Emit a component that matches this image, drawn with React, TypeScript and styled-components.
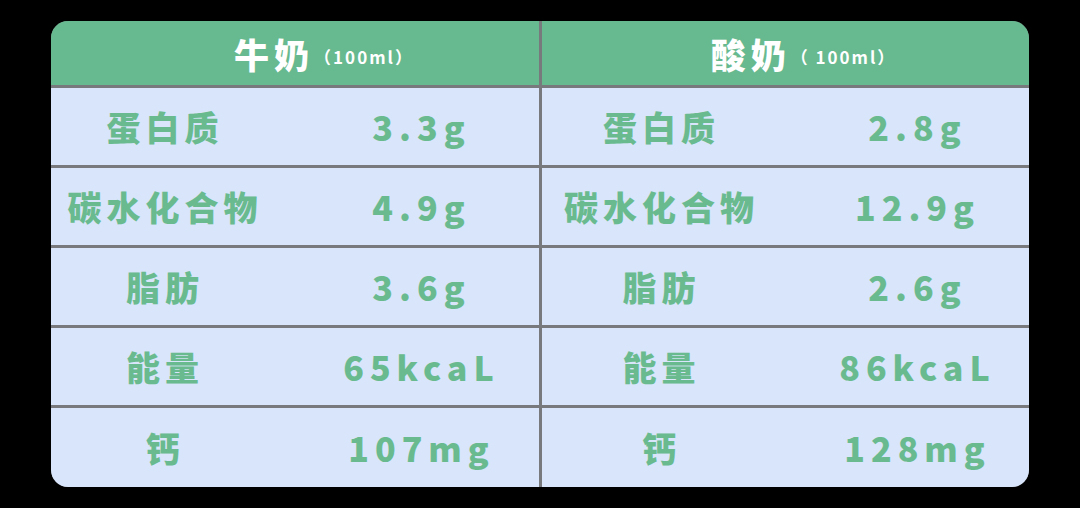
import styled, { createGlobalStyle } from "styled-components";

const GlobalStyle = createGlobalStyle`
  html, body {
    margin: 0;
    padding: 0;
    background: #000;
  }
  body {
    width: 1080px;
    height: 508px;
    overflow: hidden;
    font-family: "Noto Sans CJK SC", "Noto Sans", sans-serif;
  }
`;

const Page = styled.div`
  width: 1080px;
  height: 508px;
  padding: 21px 51px 0 51px;
  box-sizing: border-box;
  background: #000;
`;

const Table = styled.div`
  width: 978px;
  height: 466px;
  border-radius: 17px;
  overflow: hidden;
  display: grid;
  grid-template-columns: 488px 487px;
  column-gap: 3px;
  background: #77797d;
`;

const Panel = styled.div`
  display: grid;
  grid-template-rows: 64px repeat(4, 77px) 79px;
  row-gap: 3px;
`;

const Head = styled.div<{ $shift: number }>`
  background: #67b98f;
  color: #fff;
  display: flex;
  align-items: center;
  justify-content: center;
  padding-left: ${(p) => p.$shift}px;
  font-weight: 900;
`;

const HeadTitle = styled.span`
  font-size: 35px;
  letter-spacing: 5px;
  line-height: 1;
`;

const HeadUnit = styled.span`
  font-size: 17px;
  font-weight: 700;
  letter-spacing: 2px;
  margin-top: 6px;
  white-space: pre;
`;

const Row = styled.div<{ $label: number }>`
  background: #d9e5fa;
  display: grid;
  grid-template-columns: ${(p) => p.$label}px 1fr;
  align-items: center;
  color: #69bb8f;
  font-weight: 900;
  font-size: 34px;
  line-height: 1;
`;

const Label = styled.div`
  text-align: center;
  letter-spacing: 5px;
`;

const Value = styled.div`
  text-align: center;
  padding-left: 25px;
  letter-spacing: 6px;
`;

type Item = [string, string];

const milk: Item[] = [
  ["蛋白质", "3.3g"],
  ["碳水化合物", "4.9g"],
  ["脂肪", "3.6g"],
  ["能量", "65kcaL"],
  ["钙", "107mg"],
];

const yogurt: Item[] = [
  ["蛋白质", "2.8g"],
  ["碳水化合物", "12.9g"],
  ["脂肪", "2.6g"],
  ["能量", "86kcaL"],
  ["钙", "128mg"],
];

function Column({
  title,
  unit,
  shift,
  label,
  items,
}: {
  title: string;
  unit: string;
  shift: number;
  label: number;
  items: Item[];
}) {
  return (
    <Panel>
      <Head $shift={shift}>
        <HeadTitle>{title}</HeadTitle>
        <HeadUnit>{unit}</HeadUnit>
      </Head>
      {items.map(([k, v]) => (
        <Row key={k} $label={label}>
          <Label>{k}</Label>
          <Value>{v}</Value>
        </Row>
      ))}
    </Panel>
  );
}

export default function App() {
  return (
    <Page>
      <GlobalStyle />
      <Table>
        <Column title="牛奶" unit="（100ml）" shift={58} label={228} items={milk} />
        <Column title="酸奶" unit="（ 100ml）" shift={36} label={239} items={yogurt} />
      </Table>
    </Page>
  );
}
